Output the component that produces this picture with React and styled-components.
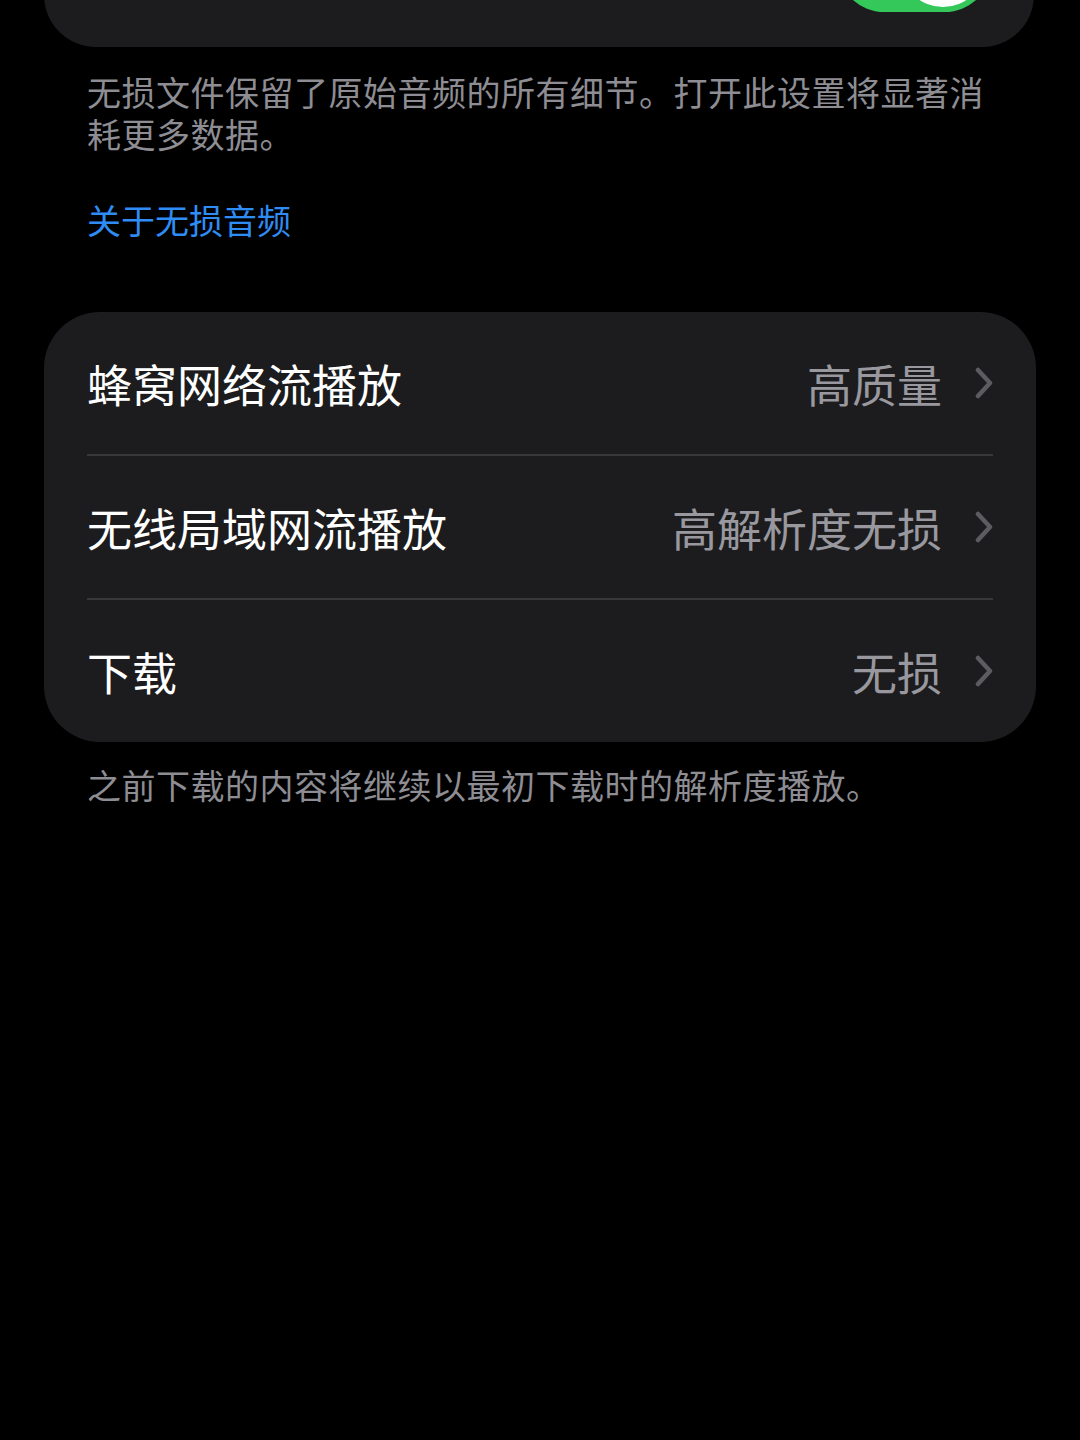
import React from 'react';
import styled, { createGlobalStyle } from 'styled-components';

const GlobalStyle = createGlobalStyle`
  *, *::before, *::after {
    box-sizing: border-box;
  }
  html, body {
    margin: 0;
    padding: 0;
    background: #000;
  }
  body {
    font-family: "Noto Sans CJK SC", "Noto Sans", sans-serif;
    -webkit-font-smoothing: antialiased;
  }
`;

const Page = styled.div`
  width: 1080px;
  min-height: 1440px;
  background: #000;
  overflow: hidden;
  display: flex;
  flex-direction: column;
`;

const TopCard = styled.div`
  height: 140px;
  margin: -93px 46px 0 44px;
  background: #1c1c1e;
  border-radius: 52px;
  display: flex;
  justify-content: flex-end;
  align-items: flex-start;
  padding: 10px 42px 0 0;
`;

const Toggle = styled.div`
  position: relative;
  width: 155px;
  height: 95px;
  border-radius: 48px;
  background: #34c759;
`;

const Knob = styled.div`
  position: absolute;
  right: 6px;
  top: 4px;
  width: 86px;
  height: 86px;
  border-radius: 50%;
  background: #fff;
`;

const Note = styled.p`
  margin: ${(p) => p.$top}px 80px 0 87px;
  font-size: 34px;
  line-height: 42px;
  color: #8d8d93;
  letter-spacing: 0.5px;
`;

const Link = styled.a`
  display: block;
  margin: 44px 0 0 87px;
  font-size: 34px;
  line-height: 42px;
  color: #2f8cf4;
  text-decoration: none;
`;

const Card = styled.div`
  margin: 71px 44px 0 44px;
  background: #1c1c1e;
  border-radius: 56px;
  display: flex;
  flex-direction: column;
`;

const Row = styled.div`
  height: 142px;
  display: flex;
  align-items: center;
  padding: 0 43px;
  gap: 33px;
`;

const Label = styled.span`
  flex: 1;
  font-size: 45px;
  color: #fff;
`;

const Value = styled.span`
  font-size: 45px;
  color: #98989e;
`;

const Separator = styled.div`
  height: 2px;
  margin: 0 43px;
  background: #38383a;
`;

const Chevron = () => (
  <svg width="18" height="32" viewBox="0 0 18 32" fill="none">
    <path d="M3 3 L15 16 L3 29" stroke="#5c5c60" strokeWidth="4.5" strokeLinecap="round" strokeLinejoin="round" />
  </svg>
);

const rows = [
  { label: '蜂窝网络流播放', value: '高质量' },
  { label: '无线局域网流播放', value: '高解析度无损' },
  { label: '下载', value: '无损' },
];

export default function App() {
  return (
    <Page>
      <GlobalStyle />
      <TopCard>
        <Toggle>
          <Knob />
        </Toggle>
      </TopCard>
      <Note $top={24}>无损文件保留了原始音频的所有细节。打开此设置将显著消耗更多数据。</Note>
      <Link>关于无损音频</Link>
      <Card>
        {rows.map((r, i) => (
          <React.Fragment key={r.label}>
            {i > 0 && <Separator />}
            <Row>
              <Label>{r.label}</Label>
              <Value>{r.value}</Value>
              <Chevron />
            </Row>
          </React.Fragment>
        ))}
      </Card>
      <Note $top={22}>之前下载的内容将继续以最初下载时的解析度播放。</Note>
    </Page>
  );
}
